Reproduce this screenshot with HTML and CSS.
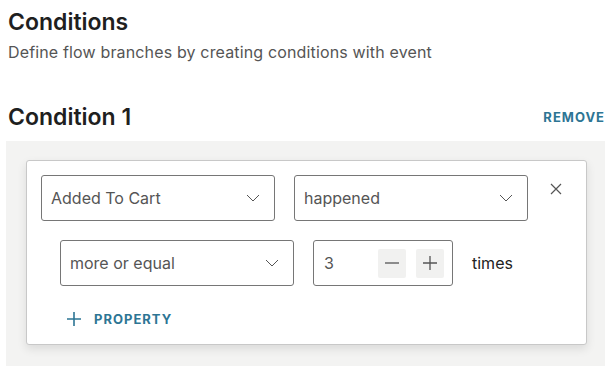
FILE: index.html
```html
<!DOCTYPE html>
<html lang="en">
<head>
    <meta charset="UTF-8">
    <title>Conditions</title>
    <link rel="stylesheet" href="styles.css">
</head>
<body>
    <div class="page">
        <h1 class="title">Conditions</h1>
        <div class="subtitle">Define flow branches by creating conditions with event</div>

        <div class="condition-head">
            <h2>Condition 1</h2>
            <a href="#" class="text-button">REMOVE</a>
        </div>

        <div class="condition-panel">
            <div class="condition-card">
                <div class="row row-event">
                    <div class="select">
                        <span>Added To Cart</span>
                        <svg class="chevron" width="14" height="8" viewBox="0 0 14 8"><path d="M1 1l6 6 6-6" fill="none" stroke="#555" stroke-width="1"/></svg>
                    </div>
                    <div class="select">
                        <span>happened</span>
                        <svg class="chevron" width="14" height="8" viewBox="0 0 14 8"><path d="M1 1l6 6 6-6" fill="none" stroke="#555" stroke-width="1"/></svg>
                    </div>
                    <button class="close-btn" aria-label="Close">
                        <svg width="12" height="12" viewBox="0 0 12 12"><path d="M1 1l10 10M11 1L1 11" stroke="#555" stroke-width="1.2"/></svg>
                    </button>
                </div>
                <div class="row row-count">
                    <div class="select">
                        <span>more or equal</span>
                        <svg class="chevron" width="14" height="8" viewBox="0 0 14 8"><path d="M1 1l6 6 6-6" fill="none" stroke="#555" stroke-width="1"/></svg>
                    </div>
                    <div class="number-input">
                        <span class="value">3</span>
                        <button class="step-btn" aria-label="Decrease">
                            <svg width="16" height="16" viewBox="0 0 16 16"><path d="M1 8h14" stroke="#555" stroke-width="1.3"/></svg>
                        </button>
                        <button class="step-btn" aria-label="Increase">
                            <svg width="16" height="16" viewBox="0 0 16 16"><path d="M1 8h14M8 1v14" stroke="#555" stroke-width="1.3"/></svg>
                        </button>
                    </div>
                    <span class="times">times</span>
                </div>
                <a href="#" class="add-property">
                    <svg width="14" height="14" viewBox="0 0 14 14"><path d="M0 7h14M7 0v14" stroke="#2d7594" stroke-width="1.6"/></svg>
                    <span>PROPERTY</span>
                </a>
            </div>
        </div>
    </div>
</body>
</html>
```

FILE: styles.css
```css
body {
    font-family: Inter, 'Noto Sans', sans-serif;
    margin: 0;
    background-color: white;
    color: #1f1f1f;
    overflow: hidden;
}
.page {
    padding: 8px 8px 0 6px;
}
.title {
    font-size: 23px;
    font-weight: 600;
    margin: 0 0 0 2px;
    line-height: 28px;
}
.subtitle {
    font-size: 16px;
    line-height: 19px;
    color: #555;
    letter-spacing: 0.15px;
    margin: 7px 0 0 2px;
}
.condition-head {
    display: flex;
    justify-content: space-between;
    align-items: center;
    margin: 31px 0 0 2px;
    height: 48px;
}
.condition-head h2 {
    font-size: 23px;
    font-weight: 600;
    margin: 0;
}
.text-button {
    font-size: 13px;
    font-weight: 700;
    color: #2d7594;
    letter-spacing: 1px;
    text-decoration: none;
}
.condition-panel {
    background-color: #f3f3f2;
    padding: 19px 18px 0 20px;
    height: 225px;
    box-sizing: border-box;
}
.condition-card {
    background-color: white;
    border: 1px solid #c8c8c8;
    border-radius: 3px;
    box-shadow: 0 4px 10px rgba(0, 0, 0, 0.1);
    padding: 14px 0 0 14px;
    height: 185px;
    box-sizing: border-box;
}
.row {
    display: flex;
    align-items: center;
}
.row-count {
    margin: 19px 0 0 19px;
}
.select {
    width: 234px;
    height: 46px;
    box-sizing: border-box;
    border: 1px solid #767676;
    border-radius: 3px;
    display: flex;
    align-items: center;
    justify-content: space-between;
    padding: 0 14px 0 9px;
    font-size: 16px;
    color: #555;
    margin-right: 19px;
}
.close-btn {
    background: none;
    border: 0;
    padding: 0;
    margin: 8px 0 0 3px;
    width: 12px;
    height: 12px;
    display: flex;
    align-self: flex-start;
}
.number-input {
    width: 140px;
    height: 46px;
    box-sizing: border-box;
    border: 1px solid #767676;
    border-radius: 3px;
    display: flex;
    align-items: center;
    padding: 0 8px 0 10px;
    font-size: 16px;
    color: #555;
}
.number-input .value {
    flex: 1;
}
.step-btn {
    width: 28px;
    height: 29px;
    background-color: #f1f1f0;
    border: 0;
    border-radius: 2px;
    padding: 0;
    display: flex;
    align-items: center;
    justify-content: center;
    margin-left: 10px;
}
.times {
    font-size: 16px;
    color: #222;
    margin-left: 19px;
}
.add-property {
    display: flex;
    align-items: center;
    gap: 13px;
    margin: 25px 0 0 26px;
    text-decoration: none;
    color: #2d7594;
    font-size: 13px;
    font-weight: 700;
    letter-spacing: 1px;
}
```
